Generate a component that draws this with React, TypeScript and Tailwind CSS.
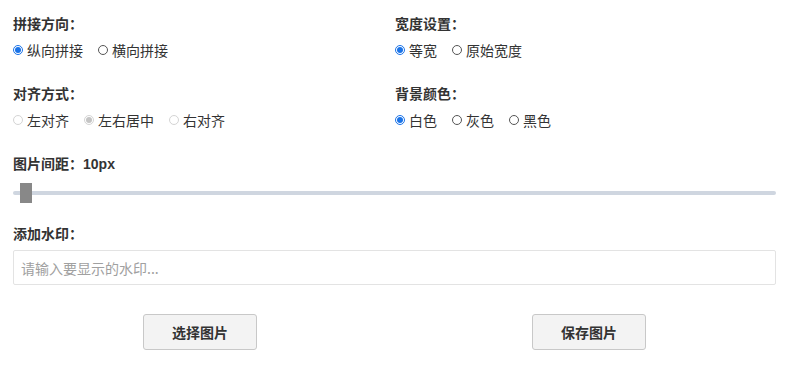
import React, { useState } from "react";

type Opt = { label: string; value: string; disabled?: boolean };

const Radio = ({ checked, disabled }: { checked: boolean; disabled?: boolean }) => {
    if (disabled) {
        return (
            <span className="flex items-center justify-center w-[10px] h-[10px] rounded-full border border-[#d4d4d4] bg-white">
                {checked && <span className="w-[6px] h-[6px] rounded-full bg-[#c4c4c4]" />}
            </span>
        );
    }
    return checked ? (
        <span className="flex items-center justify-center w-[10px] h-[10px] rounded-full border border-[#1a73e8] bg-white">
            <span className="w-[6px] h-[6px] rounded-full bg-[#1a73e8]" />
        </span>
    ) : (
        <span className="w-[10px] h-[10px] rounded-full border border-[#555] bg-white" />
    );
};

const RadioGroup = ({
    title,
    options,
    value,
    onChange,
}: {
    title: string;
    options: Opt[];
    value: string;
    onChange: (v: string) => void;
}) => (
    <div className="flex flex-col gap-[7px]">
        <div className="h-5 leading-5 text-[14px] font-bold text-[#333]">{title}</div>
        <div className="flex items-center gap-[15px] h-5">
            {options.map((o) => (
                <label
                    key={o.value}
                    className="flex items-center gap-[4px] cursor-pointer select-none text-[14px] leading-5 text-[#333]"
                    onClick={() => !o.disabled && onChange(o.value)}
                >
                    <Radio checked={value === o.value} disabled={o.disabled} />
                    <span>{o.label}</span>
                </label>
            ))}
        </div>
    </div>
);

const App = () => {
    const [dir, setDir] = useState("v");
    const [width, setWidth] = useState("same");
    const [align, setAlign] = useState("center");
    const [bg, setBg] = useState("white");
    const [gap] = useState(10);
    const [mark, setMark] = useState("");

    return (
        <section
            className="w-[800px] h-[369px] bg-white px-[13px] pt-[13px] text-[#333]"
            style={{ fontFamily: '"Noto Sans CJK SC", "Noto Sans", sans-serif' }}
        >
            {/* 单选项 */}
            <div className="grid grid-cols-[382px_1fr] gap-y-[23px]">
                <RadioGroup
                    title="拼接方向："
                    value={dir}
                    onChange={setDir}
                    options={[
                        { label: "纵向拼接", value: "v" },
                        { label: "横向拼接", value: "h" },
                    ]}
                />
                <RadioGroup
                    title="宽度设置："
                    value={width}
                    onChange={setWidth}
                    options={[
                        { label: "等宽", value: "same" },
                        { label: "原始宽度", value: "raw" },
                    ]}
                />
                <RadioGroup
                    title="对齐方式："
                    value={align}
                    onChange={setAlign}
                    options={[
                        { label: "左对齐", value: "left", disabled: true },
                        { label: "左右居中", value: "center", disabled: true },
                        { label: "右对齐", value: "right", disabled: true },
                    ]}
                />
                <RadioGroup
                    title="背景颜色："
                    value={bg}
                    onChange={setBg}
                    options={[
                        { label: "白色", value: "white" },
                        { label: "灰色", value: "gray" },
                        { label: "黑色", value: "black" },
                    ]}
                />
            </div>

            {/* 间距 */}
            <div className="mt-[23px] h-5 leading-5 text-[14px] font-bold">
                图片间距：<span className="font-['Liberation_Sans',sans-serif]">{gap}px</span>
            </div>
            <div className="relative mt-[10px] h-5 w-[763px] flex items-center">
                <div className="w-full h-[4px] rounded-full bg-[#cfd6e0]" />
                <div className="absolute left-[7px] top-0 w-[12px] h-5 bg-[#888]" />
            </div>

            {/* 水印 */}
            <div className="mt-[20px] h-5 leading-5 text-[14px] font-bold">添加水印：</div>
            <input
                value={mark}
                onChange={(e) => setMark(e.target.value)}
                placeholder="请输入要显示的水印..."
                className="mt-[7px] block w-[763px] h-[35px] px-[7px] text-[14px] border border-[#e3e3e3] rounded-[2px] outline-none placeholder:text-[#a0a0a0]"
            />

            {/* 按钮 */}
            <div className="mt-[29px] w-[763px] flex justify-between px-[130px]">
                <button className="w-[114px] h-[36px] rounded-[3px] border border-[#c8c8c8] bg-[#f3f3f3] text-[14px] font-bold text-[#333]">
                    选择图片
                </button>
                <button className="w-[114px] h-[36px] rounded-[3px] border border-[#c8c8c8] bg-[#f3f3f3] text-[14px] font-bold text-[#333]">
                    保存图片
                </button>
            </div>
        </section>
    );
};

export default App;
